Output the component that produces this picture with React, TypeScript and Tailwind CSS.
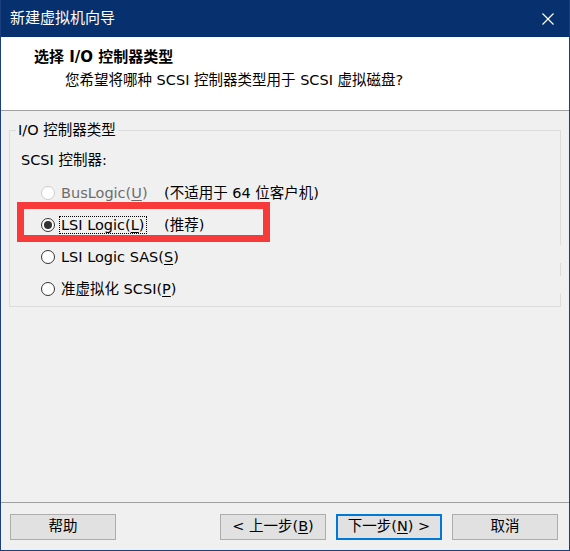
const font = "font-['Tahoma','DejaVu_Sans','Noto_Sans_CJK_SC',sans-serif]";

function Radio({ checked, disabled }: { checked?: boolean; disabled?: boolean }) {
  return (
    <span
      className={`flex h-[14px] w-[14px] shrink-0 items-center justify-center rounded-full border bg-white ${
        disabled ? "border-[#cccccc]" : "border-[#333333]"
      }`}
    >
      {checked && <span className="h-[8px] w-[8px] rounded-full bg-[#333333]" />}
    </span>
  );
}

function Btn({ children, primary }: { children: React.ReactNode; primary?: boolean }) {
  return (
    <button
      className={`flex h-[26px] w-[106px] items-center justify-center whitespace-nowrap bg-[#e1e1e1] text-[14.5px] text-black ${
        primary ? "border-2 border-[#0078d7]" : "border border-[#adadad]"
      }`}
    >
      {children}
    </button>
  );
}

export default function App() {
  const options = [
    { label: "BusLogic(", key: "U", note: "(不适用于 64 位客户机)", disabled: true },
    { label: "LSI Logic(", key: "L", note: "(推荐)", checked: true },
    { label: "LSI Logic SAS(", key: "S" },
    { label: "准虚拟化 SCSI(", key: "P" },
  ];

  return (
    <div className={`relative flex h-[551px] w-[570px] flex-col border border-t-0 border-[#1c3f80] bg-[#f0f0f0] ${font}`}>
      {/* title bar */}
      <div className="flex h-[37px] items-center justify-between bg-[#07306e] pl-[9px] pr-[15px] text-[15px] text-white">
        <span>新建虚拟机向导</span>
        <svg width="12" height="12" viewBox="0 0 12 12" className="text-white">
          <path d="M0.5 0.5L11.5 11.5M11.5 0.5L0.5 11.5" stroke="currentColor" strokeWidth="1.2" />
        </svg>
      </div>

      {/* header */}
      <div className="h-[74px] border-b border-[#a0a0a0] bg-white pl-[33px] pt-[9px]">
        <div className="text-[15px] font-bold leading-[22px] text-black">选择 I/O 控制器类型</div>
        <div className="pl-[31px] text-[14.5px] leading-[24px] text-black">
          您希望将哪种 SCSI 控制器类型用于 SCSI 虚拟磁盘?
        </div>
      </div>

      {/* body */}
      <div className="flex-1 px-[8px] pt-[19px]">
        <div className="relative h-[177px] border border-[#dcdcdc] pl-[11px] pt-[19px]">
          <span className="absolute left-[6px] top-[-11px] bg-[#f0f0f0] px-[2px] text-[14.5px] leading-[20px] text-black">
            I/O 控制器类型
          </span>
          {/* gaps in the right edge */}
          <span className="absolute right-[-1px] top-[114px] h-[18px] w-[1px] bg-[#f0f0f0]" />
          <span className="absolute right-[-1px] top-[145px] h-[18px] w-[1px] bg-[#f0f0f0]" />

          <div className="text-[14.5px] leading-[20px] text-black">SCSI 控制器:</div>
          <div className="mt-[7px] flex flex-col">
            {options.map((o) => (
              <div key={o.key} className="flex h-[32px] items-center whitespace-nowrap pl-[20px]">
                <Radio checked={o.checked} disabled={o.disabled} />
                <span
                  className={`ml-[5px] min-w-[104px] text-[14.5px] leading-[20px] ${
                    o.disabled ? "text-[#6d6d6d]" : "text-black"
                  }`}
                >
                  <span className={`px-[1px] ${o.checked ? "outline outline-1 outline-dotted outline-black" : ""}`}>
                    {o.label}
                    <span className="underline underline-offset-2">{o.key}</span>)
                  </span>
                </span>
                {o.note && <span className="text-[14.5px] leading-[20px] text-black">{o.note}</span>}
              </div>
            ))}
          </div>
        </div>
      </div>

      {/* footer */}
      <div className="flex h-[48px] items-start border-t border-[#a0a0a0] pl-[9px] pt-[11px]">
        <Btn>帮助</Btn>
        <div className="ml-[104px] flex gap-[10px]">
          <Btn>
            &lt; 上一步(<span className="underline underline-offset-2">B</span>)
          </Btn>
          <Btn primary>
            下一步(<span className="underline underline-offset-2">N</span>) &gt;
          </Btn>
          <Btn>取消</Btn>
        </div>
      </div>

      {/* red highlight */}
      <div className="pointer-events-none absolute left-[16px] top-[202px] h-[40px] w-[253px] border-[7px] border-[#f93a3a]" />
    </div>
  );
}
